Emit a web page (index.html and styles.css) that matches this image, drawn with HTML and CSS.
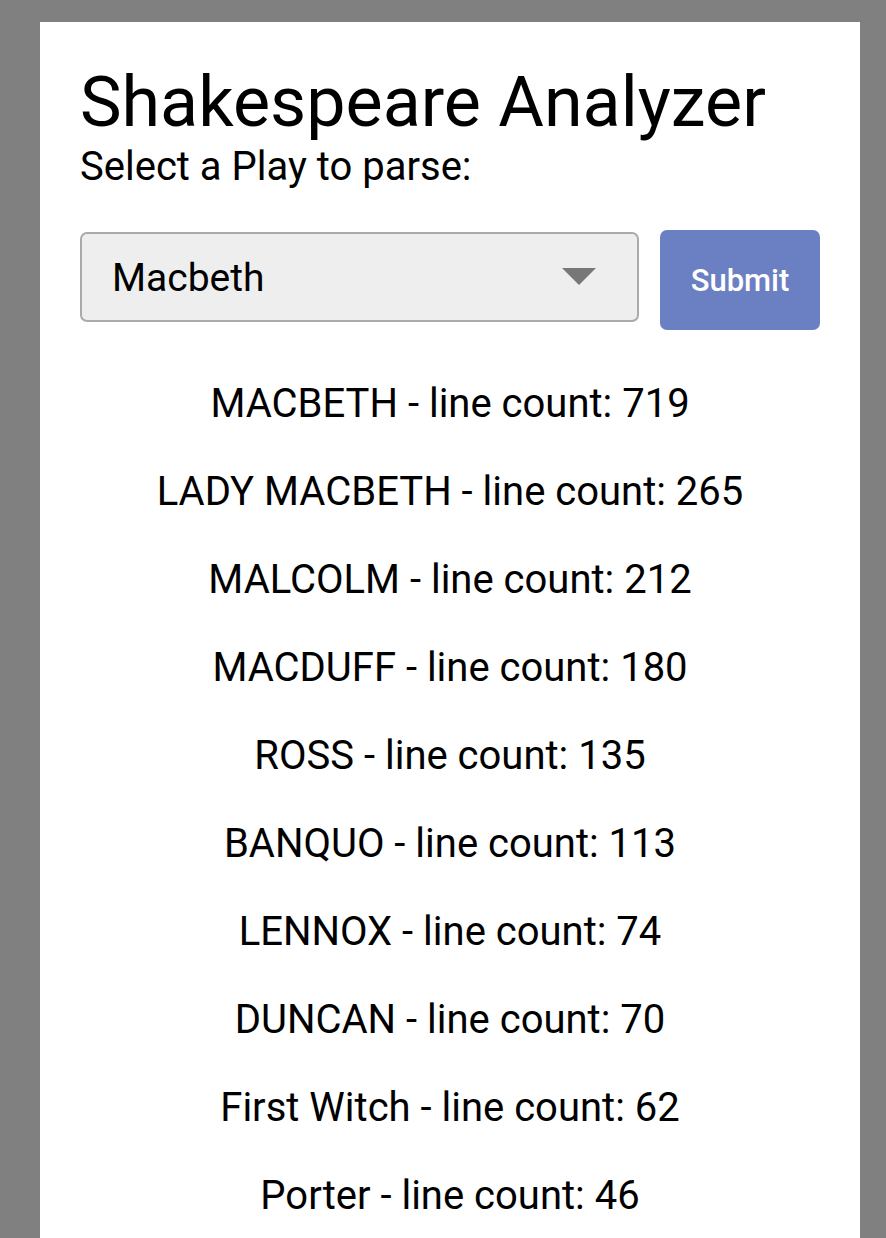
FILE: index.html
```html
<!DOCTYPE html>
<html>
<head>
<meta charset="utf-8">
<link rel="stylesheet" href="styles.css">
</head>
<body>
<main class="card">
  <h1 class="title">Shakespeare Analyzer</h1>
  <p class="subtitle">Select a Play to parse:</p>
  <form class="controls">
    <div class="select">
      <span class="select-value">Macbeth</span>
      <span class="select-arrow"></span>
    </div>
    <button type="button" class="submit">Submit</button>
  </form>
  <ul class="results">
    <li>MACBETH - line count: 719</li>
    <li>LADY MACBETH - line count: 265</li>
    <li>MALCOLM - line count: 212</li>
    <li>MACDUFF - line count: 180</li>
    <li>ROSS - line count: 135</li>
    <li>BANQUO - line count: 113</li>
    <li>LENNOX - line count: 74</li>
    <li>DUNCAN - line count: 70</li>
    <li>First Witch - line count: 62</li>
    <li>Porter - line count: 46</li>
  </ul>
</main>
</body>
</html>
```

FILE: styles.css
```css
html, body {
  margin: 0;
  padding: 0;
}
body {
  background: #808080;
  font-family: Roboto, "Noto Sans", sans-serif;
  color: #000;
  height: 1238px;
  overflow: hidden;
}
.card {
  box-sizing: border-box;
  margin: 22px 26px 0 40px;
  background: #fff;
  padding: 45px 40px 0 40px;
  height: 1216px;
}
.title {
  margin: 0;
  font-size: 70px;
  font-weight: 400;
  line-height: 70px;
}
.subtitle {
  margin: 0;
  font-size: 40px;
  line-height: 60px;
}
.controls {
  display: flex;
  align-items: flex-start;
  gap: 21px;
  margin-top: 33px;
}
.select {
  flex: 0 0 559px;
  box-sizing: border-box;
  height: 90px;
  margin-top: 2px;
  border: 2px solid #aaaaaa;
  border-radius: 7px;
  background: #eeeeee;
  display: flex;
  align-items: center;
  justify-content: space-between;
  padding: 2px 41px 0 30px;
}
.select-value {
  font-size: 39px;
}
.select-arrow {
  width: 0;
  height: 0;
  margin-top: -4px;
  border-left: 17px solid transparent;
  border-right: 17px solid transparent;
  border-top: 17px solid #777777;
}
.submit {
  width: 160px;
  height: 100px;
  border: none;
  border-radius: 7px;
  background: #6b80c2;
  color: #fff;
  font-family: Roboto, sans-serif;
  font-size: 31px;
  font-weight: 500;
  padding: 0;
}
.results {
  list-style: none;
  margin: 52px 0 0 0;
  padding: 0;
  text-align: center;
}
.results li {
  font-size: 40px;
  line-height: 44px;
  margin-bottom: 44px;
}
.results li:last-child {
  margin-bottom: 0;
}
```
